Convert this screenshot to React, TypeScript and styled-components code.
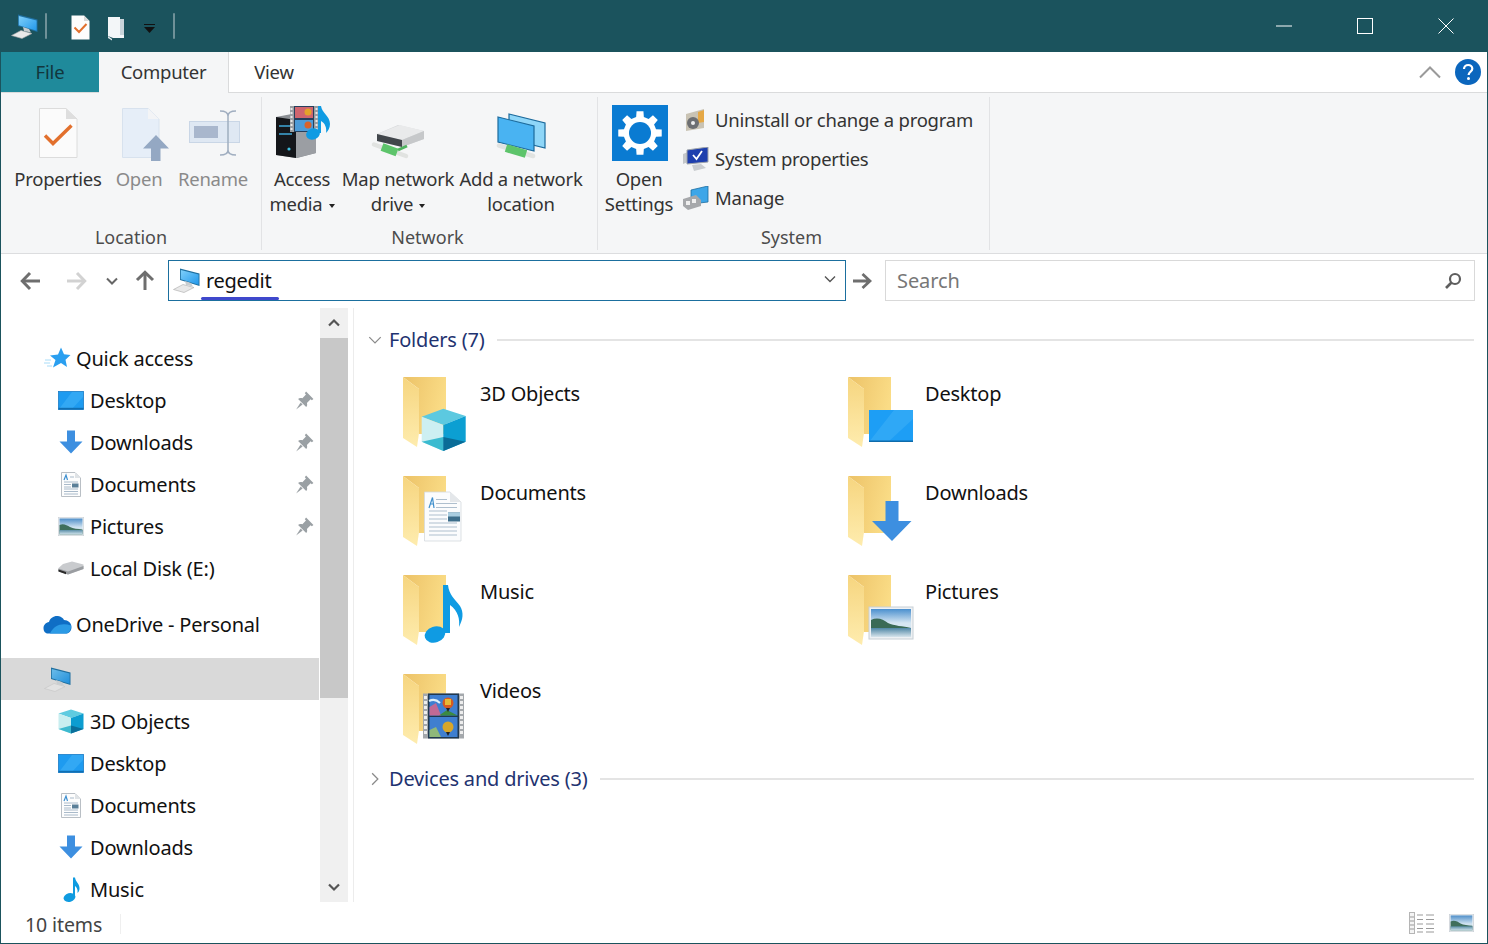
import React from "react";
import styled, { createGlobalStyle } from "styled-components";

const FONT = `"Noto Sans", "Open Sans", "Liberation Sans", sans-serif`;

const Global = createGlobalStyle`
  html, body { margin: 0; padding: 0; background: #fff; }
  body { font-family: ${FONT}; }
  * { box-sizing: border-box; }
  svg { display: block; flex: none; }
`;

const Win = styled.div`
  width: 1488px; height: 944px; display: flex; flex-direction: column; overflow: hidden;
  border: 1px solid #1b535d; border-top: 0; background: #fff;
`;
const TitleBar = styled.div`
  height: 52px; margin: 0 -1px; background: #1b535d; display: flex; align-items: center; flex: none;
`;
const Qat = styled.div`display: flex; align-items: center; padding-left: 11px; flex: 1;`;
const QatSep = styled.div<{ $l: number; $r: number }>`
  height: 26px; width: 0; background: #1b535d; border: 1px solid #6f9198; border-width: 0 1px; border-radius: 1px;
  box-sizing: content-box; margin: 0 ${(p) => p.$r}px 0 ${(p) => p.$l}px;
`;
const QatIcon = styled.div<{ $l: number; $t: number }>`margin-left: ${(p) => p.$l}px; margin-top: ${(p) => p.$t}px;`;
const WinBtn = styled.div`width: 81px; height: 52px; display: flex; align-items: center; justify-content: center;`;
const WinControls = styled.div`display: flex; padding-right: 2px;`;

const TabBar = styled.div`
  height: 41px; flex: none; display: flex; border-bottom: 1px solid #dadbdc; background: #fff; align-items: stretch;
`;
const FileTab = styled.div`
  width: 98px; background: #1f8a9b; color: #12363d; font-size: 18.5px; letter-spacing: -0.2px; padding-bottom: 2px;
  display: flex; align-items: center; justify-content: center;
`;
const Tab = styled.div<{ $active?: boolean }>`
  width: ${(p) => (p.$active ? 130 : 90)}px; background: ${(p) => (p.$active ? "#f5f6f7" : "#fff")};
  margin-bottom: ${(p) => (p.$active ? -1 : 0)}px;
  ${(p) => (p.$active ? "border-right: 1px solid #dadbdc;" : "")}
  color: #333; font-size: 18.5px; letter-spacing: -0.25px; padding-bottom: 2px; display: flex; align-items: center; justify-content: center;
`;
const TabRight = styled.div`margin-left: auto; display: flex; align-items: center; gap: 14px; padding-right: 6px;`;

const Ribbon = styled.div`
  height: 161px; flex: none; background: #f5f6f7; border-bottom: 1px solid #dcdddf; display: flex; padding: 4px 0 3px;
  letter-spacing: -0.25px;
`;
const Group = styled.div<{ $w: number; $pad: number }>`
  width: ${(p) => p.$w}px; padding-left: ${(p) => p.$pad}px; border-right: 1px solid #e2e3e5; display: flex; flex-direction: column;
`;
const Commands = styled.div`flex: 1; display: flex; min-height: 0;`;
const GroupLabel = styled.div<{ $shift: number }>`
  height: 26px; line-height: 26px; text-align: center; color: #4c4c4c; font-size: 18px; letter-spacing: 0; margin-left: ${(p) => -p.$shift}px;
`;
const Command = styled.div<{ $w: number; $dim?: boolean }>`
  width: ${(p) => p.$w}px; padding-top: 6px; display: flex; flex-direction: column; align-items: center;
  color: ${(p) => (p.$dim ? "#8a8a8a" : "#333")}; font-size: 18.5px; line-height: 25px; text-align: center; white-space: nowrap;
`;
const CommandIcon = styled.div`height: 63px; width: 64px; flex: none;`;
const Caret = styled.span`
  display: inline-block; width: 0; height: 0; margin-left: 6px; vertical-align: 3px;
  border-left: 3.5px solid transparent; border-right: 3.5px solid transparent; border-top: 4px solid #222;
`;
const SmallList = styled.div`display: flex; flex-direction: column; padding: 3px 0 0 7px;`;
const SmallCmd = styled.div`
  height: 39px; display: flex; align-items: center; gap: 6px; color: #333; font-size: 18.5px; white-space: nowrap;
`;

const Nav = styled.div`height: 54px; flex: none; display: flex; align-items: center; padding: 0 0 2px 18px; background: #fff;`;
const NavSlot = styled.div<{ $gap: number }>`margin-left: ${(p) => p.$gap}px; margin-top: 2px; flex: none;`;
const Address = styled.div`
  position: relative; margin-left: 11px; width: 678px; height: 41px; border: 1px solid #1b6f9e; display: flex; align-items: center; padding-left: 4px;
`;
const AddressText = styled.div`margin-left: 6px; font-size: 20px; letter-spacing: -0.3px; color: #111; line-height: 24px; margin-top: 1px;`;
const Squiggle = styled.div`
  position: absolute; left: 32px; bottom: 0; width: 78px; height: 3px; background: #3f48cc; border-radius: 2px;
`;
const AddressChevron = styled.div`margin-left: auto; padding-right: 8px; margin-top: -3px;`;
const Search = styled.div`
  margin-left: 11px; width: 590px; height: 41px; border: 1px solid #d9d9d9; display: flex; align-items: center; justify-content: space-between;
  padding: 1px 12px 0 11px; color: #777; font-size: 20px; letter-spacing: -0.1px;
`;

const Body = styled.div`flex: 1; min-height: 0; display: flex; letter-spacing: -0.2px;`;
const Side = styled.div`width: 318px; margin-right: 1px; flex: none; padding-top: 29px; overflow: hidden;`;
const Row = styled.div<{ $child?: boolean; $sel?: boolean; $gapTop?: number }>`
  height: 42px; display: flex; align-items: center; gap: 6px; flex: none;
  padding-left: ${(p) => (p.$child ? 57 : 43)}px; padding-right: 4px;
  margin-top: ${(p) => p.$gapTop ?? 0}px;
  background: ${(p) => (p.$sel ? "#d9d9d9" : "transparent")};
  color: #111; font-size: 20px; white-space: nowrap;
`;
const RowIcon = styled.div`width: 26px; height: 26px; display: flex; align-items: center; justify-content: center; flex: none;`;
const PinSlot = styled.div`margin-left: auto;`;

const Scroll = styled.div`width: 28px; flex: none; display: flex; flex-direction: column; background: #f0f0f0;`;
const ScrollBtn = styled.div`height: 30px; flex: none; display: flex; align-items: center; justify-content: center;`;
const Thumb = styled.div`height: 360px; flex: none; background: #c8c8c8;`;
const ScrollTrack = styled.div`flex: 1;`;

const Content = styled.div`
  flex: 1; margin-left: 5px; border-left: 1px solid #ececec; padding: 20px 13px 0 15px; min-width: 0;
`;
const Header = styled.div<{ $top?: number }>`
  height: 24px; display: flex; align-items: center; margin-top: ${(p) => p.$top ?? 0}px;
  color: #1f3370; font-size: 20px; white-space: nowrap;
`;
const HeaderChevron = styled.div`margin-left: -2px;`;
const HeaderTitle = styled.span`margin-left: 6px; line-height: 24px;`;
const HeaderLine = styled.div`flex: 1; height: 2px; background: #e4e4e4; margin-left: 12px;`;
const Grid = styled.div`
  display: grid; grid-template-columns: 445px 445px; grid-auto-rows: 74px; row-gap: 25px; margin: 25px 0 0 34px;
`;
const Item = styled.div`display: flex; gap: 11px;`;
const ItemName = styled.div`font-size: 20px; color: #111; line-height: 24px; padding-top: 5px;`;

const Status = styled.div`height: 41px; flex: none; display: flex; align-items: center; padding: 3px 13px 0 24px; color: #444; font-size: 19.5px; letter-spacing: -0.1px;`;
const StatusSep = styled.div`width: 1px; height: 20px; background: #efefef; margin-left: 18px;`;
const StatusViews = styled.div`margin-left: auto; display: flex; gap: 14px; align-items: center; margin-top: -3px;`;

/* ---------- drawings ---------- */
const gearPath = (cx: number, cy: number, R: number, r: number, teeth: number) => {
  const pts: string[] = [];
  const step = (Math.PI * 2) / teeth;
  for (let i = 0; i < teeth; i++) {
    const a = i * step - Math.PI / 2;
    const w = step * 0.2;
    const w2 = step * 0.3;
    [[a - w2, r], [a - w, R], [a + w, R], [a + w2, r]].forEach(([t, d]) =>
      pts.push(`${(cx + Math.cos(t) * d).toFixed(2)} ${(cy + Math.sin(t) * d).toFixed(2)}`)
    );
  }
  return "M" + pts.join("L") + "Z";
};

const ComputerIcon = ({ dim = false }: { dim?: boolean }) => (
  <svg width="27" height="25" viewBox="0 0 27 25">
    <defs>
      <linearGradient id="cscr" x1="0" y1="0" x2="1" y2="1">
        <stop offset="0" stopColor="#7fd0fb" /><stop offset="1" stopColor="#2197ea" />
      </linearGradient>
    </defs>
    <path d="M7 0.5L26.5 5.5V18L7 12Z" fill="#1f6f9f" />
    <path d="M7.8 2L25.6 6.5V16.8L7.8 11.2Z" fill="url(#cscr)" opacity={dim ? 0.8 : 1} />
    <path d="M0.5 21.5L10 16.5L21 19.5L11 24.5Z" fill={dim ? "#e2e2e2" : "#e9e9e9"} stroke={dim ? "#c4c4c4" : "#aaa"} strokeWidth="0.6" />
    <path d="M12 13L18 15L20 18.5L13 17Z" fill="#c8cdd0" />
  </svg>
);

const Arrow = ({ color, dir }: { color: string; dir: "l" | "r" | "u" }) => {
  const rot = dir === "l" ? 0 : dir === "r" ? 180 : 90;
  return (
    <svg width="24" height="24" viewBox="0 0 24 24">
      <g transform={`rotate(${rot} 12 12)`} fill="none" stroke={color} strokeWidth="3">
        <path d="M3 12H21" /><path d="M11 4L3.3 12L11 20" />
      </g>
    </svg>
  );
};

const Chevron = ({ size = 14, color = "#555", dir = "d", sw = 2 }: { size?: number; color?: string; dir?: "d" | "u" | "r"; sw?: number }) => {
  const d = dir === "d" ? "M2 4.5L7 9.5L12 4.5" : dir === "u" ? "M2 9.5L7 4.5L12 9.5" : "M4.5 2L9.5 7L4.5 12";
  return (
    <svg width={size} height={size} viewBox="0 0 14 14"><path d={d} fill="none" stroke={color} strokeWidth={sw} /></svg>
  );
};

const Pin = () => (
  <svg width="21" height="21" viewBox="0 0 20 20">
    <g fill="#9aa0a4">
      <path d="M11.5 1.5L18.5 8.5L17 9.8L15.8 8.8L12.3 12.3C12.8 14 12.5 15.3 11.6 16.3L3.9 8.6C4.9 7.6 6.2 7.3 8 7.9L11.4 4.4L10.3 3Z" />
      <path d="M6.3 12L8.2 13.9L2 18.5Z" />
    </g>
  </svg>
);

const StarIcon = () => (
  <svg width="27" height="22" viewBox="0 0 27 22">
    <path d="M1 13H7M0 16H6M3 19H8" stroke="#a8dcf8" strokeWidth="1" />
    <path d="M17 0.5L20 7.3L26.5 8L21.5 12.7L23 20L17 16L9 20.5L11.5 13L6 8.5L14 7.5Z" fill="#2a9ff0" />
  </svg>
);
const DesktopIcon = () => (
  <svg width="26" height="19" viewBox="0 0 26 19">
    <rect x="0.5" y="0.5" width="25" height="18" fill="#1e9bf0" stroke="#1a7cc5" strokeWidth="0.8" />
    <path d="M1 18L14 1H25V6L14 18Z" fill="#3fb0f7" opacity="0.6" />
    <rect x="0.5" y="16.8" width="25" height="1.7" fill="#0f6fb3" />
  </svg>
);
const DownIcon = () => (
  <svg width="24" height="24" viewBox="0 0 24 24">
    <path d="M8 0.5H16V11.5H23.5L12 23.5L0.5 11.5H8Z" fill="#3d8fe0" />
  </svg>
);
const DocIcon = () => (
  <svg width="20" height="25" viewBox="0 0 20 25">
    <path d="M0.5 0.5H14L19.5 6V24.5H0.5Z" fill="#fdfdfd" stroke="#b9bfc5" />
    <path d="M14 0.5V6H19.5Z" fill="#dfe3e6" />
    <path d="M3 8L5 3L6.5 8" stroke="#3d8fd0" strokeWidth="1.2" fill="none" />
    <path d="M9 5H13M3 10H17M3 17H17M3 19.5H17M3 22H17M3 12.5H10M3 15H10" stroke="#9fb2c4" strokeWidth="0.9" />
    <rect x="11" y="11.5" width="6.5" height="4" fill="#5a7f98" />
  </svg>
);
const PicIcon = ({ w = 26, h = 19 }: { w?: number; h?: number }) => (
  <svg width={w} height={h} viewBox="0 0 26 19">
    <defs>
      <linearGradient id="psky" x1="0" y1="0" x2="0" y2="1"><stop offset="0" stopColor="#4f8fc9" /><stop offset="0.55" stopColor="#cfe2f0" /></linearGradient>
      <linearGradient id="psea" x1="0" y1="0" x2="0" y2="1"><stop offset="0" stopColor="#5c8fa8" /><stop offset="1" stopColor="#d2e4ec" /></linearGradient>
    </defs>
    <rect x="0" y="0" width="26" height="19" fill="#f0f2f4" stroke="#c5ccd2" strokeWidth="1" />
    <rect x="1.5" y="1.5" width="23" height="16" fill="url(#psky)" />
    <path d="M1.5 8C5 6 9 8 12 10C15 11.5 20 12 24.5 12.5V17.5H1.5Z" fill="#3f6f5c" />
    <rect x="1.5" y="13" width="23" height="4.5" fill="url(#psea)" />
  </svg>
);
const DiskIcon = () => (
  <svg width="26" height="14" viewBox="0 0 26 14">
    <path d="M5 3L14 0.5L25.5 3.5V8L10 13.5L0.5 10V7Z" fill="#c9cbce" />
    <path d="M0.5 7.5L10 10.5L25.5 5V8L10 13.5L0.5 10.5Z" fill="#9a9da1" />
    <path d="M0.5 8.5L8 11V13.2L0.5 10.5Z" fill="#2b2b2b" />
  </svg>
);
const CloudIcon = () => (
  <svg width="29" height="19" viewBox="0 0 29 19">
    <path d="M6 7C7 3 11 0.5 15 1C18 1.4 20 3 21 5C25 5 28.5 8 28.5 12C28.5 16 26 18.5 23 18.5H5C2 18.5 0.5 16 0.5 13C0.5 10 3 7.5 6 7Z" fill="#0f6ec5" />
    <path d="M7 18.5C11 10 19 7.5 28 10.5C28.5 14 26 18.5 23 18.5Z" fill="#2b9ae5" />
  </svg>
);
const CubeSmall = () => (
  <svg width="26" height="25" viewBox="0 0 26 25">
    <path d="M13 0.5L25.5 4.5L13 9L0.5 4.5Z" fill="#5fcbe0" />
    <path d="M0.5 4.5L13 9V24.5L0.5 20Z" fill="#c8eef0" />
    <path d="M25.5 4.5L13 9V24.5L25.5 20Z" fill="#0d9dd0" />
    <path d="M0.5 20L13 16.5V24.5Z" fill="#3db9cf" />
    <path d="M25.5 20L13 16.5V24.5Z" fill="#0b6f9a" />
  </svg>
);
const NoteSmall = () => (
  <svg width="17" height="25" viewBox="0 0 17 25">
    <ellipse cx="6.5" cy="20.5" rx="6" ry="4.3" fill="#0f9be0" transform="rotate(-15 6.5 20.5)" />
    <path d="M10 20V0.5H12C12.5 5 17 7 16.5 12C16.3 14 15.5 15 14.5 16C15 12 13.5 10 12 9V20Z" fill="#0f9be0" />
  </svg>
);

const Folder = ({ children }: { children?: React.ReactNode }) => (
  <svg width="66" height="74" viewBox="0 0 66 74" style={{ overflow: "visible" }}>
    <defs>
      <linearGradient id="fback" x1="0" y1="0" x2="1" y2="0.3"><stop offset="0" stopColor="#ecc267" /><stop offset="1" stopColor="#fadc86" /></linearGradient>
      <linearGradient id="fflap" x1="0" y1="0" x2="0" y2="1"><stop offset="0" stopColor="#f6d57f" /><stop offset="1" stopColor="#feecae" /></linearGradient>
    </defs>
    <path d="M0 0H43V57H16V12Z" fill="url(#fback)" />
    <path d="M14 57H40L34 66H14Z" fill="#fff" />
    <path d="M0 0L16 12V56L14 70L0 61Z" fill="url(#fflap)" />
    {children}
  </svg>
);
const FDesktop = () => (
  <g>
    <rect x="21" y="33" width="44" height="32" fill="#1d9ef5" />
    <path d="M21 65L46 33H65V42L40 65Z" fill="#48b4f8" opacity="0.45" />
    <rect x="21" y="63.5" width="44" height="1.5" fill="#0e6bab" />
  </g>
);
const FCube = () => (
  <g>
    <path d="M40.3 31.7L62.7 39L40.3 48L18.7 39.7Z" fill="#5cc9e0" />
    <path d="M18.7 39.7L40.3 48V74L18.7 64.7Z" fill="#cdeff2" />
    <path d="M62.7 39L40.3 48V74L62.7 64.7Z" fill="#0c9fd2" />
    <path d="M18.7 64.7L40.3 60V74Z" fill="#3bbbd0" />
    <path d="M62.7 64.7L40.3 60V74Z" fill="#0a6c97" />
  </g>
);
const FDoc = () => (
  <g>
    <path d="M21.5 16H47L58 26V65H21.5Z" fill="#fbfcfd" stroke="#d4d9dd" strokeWidth="0.8" />
    <path d="M47 16V26H58Z" fill="#e4e7ea" />
    <path d="M26 32L29.5 21.5L31 32M27 28H31" stroke="#3f8fcc" strokeWidth="1.2" fill="none" />
    <path d="M33 23.5H44M33 27.5H54M33 31.5H54M26 35H44M26 39H44M26 43H44M26 47H54M26 51H54M26 55H54M26 59H54" stroke="#aebfce" strokeWidth="1" />
    <rect x="45" y="36.5" width="12" height="9" fill="#3d6e8b" />
    <rect x="45" y="36.5" width="12" height="4" fill="#a9cde0" />
  </g>
);
const FDown = () => <path d="M37.5 25H50.5V45H63.5L44 65L24 45H37.5Z" fill="#3d8fe0" />;
const FMusic = () => (
  <g fill="#0f9be3">
    <ellipse cx="32" cy="59.5" rx="10.5" ry="8" transform="rotate(-18 32 59.5)" />
    <path d="M40 58V10H45C46 20 52 24 57 31C61 38 60 44 56 52C57 44 55 36 47 30V58Z" />
  </g>
);
const FPic = () => (
  <g>
    <defs>
      <linearGradient id="psky2" x1="0" y1="0" x2="0" y2="1"><stop offset="0" stopColor="#4b90cf" /><stop offset="0.5" stopColor="#d6e6f2" /><stop offset="1" stopColor="#d6e6f2" /></linearGradient>
      <linearGradient id="psea2" x1="0" y1="0" x2="0" y2="1"><stop offset="0" stopColor="#4f86a5" /><stop offset="1" stopColor="#d7e5ec" /></linearGradient>
    </defs>
    <rect x="21" y="32" width="44" height="32" fill="#eef1f4" stroke="#c8d0d6" />
    <rect x="23" y="34" width="40" height="28" fill="url(#psky2)" />
    <path d="M23 45C29 42 35 44 40 48C46 51 55 51 63 53V62H23Z" fill="#3a6a55" />
    <rect x="23" y="53" width="40" height="9" fill="url(#psea2)" />
  </g>
);
const FilmFrames = () => (
  <g>
    <rect x="20" y="19.5" width="41" height="45" fill="#a4a8ac" />
    <rect x="25" y="19.5" width="31" height="45" fill="#20384f" />
    <rect x="26.5" y="21" width="28" height="20.5" fill="#3f7fd0" />
    <rect x="26.5" y="43" width="28" height="20" fill="#3f7fd0" />
    <path d="M26.5 41.5V33L33 29L38 41.5Z" fill="#c06a95" />
    <path d="M26.5 63V56L33 53L38 63Z" fill="#8fb87a" />
    <path d="M36 41.5L44 36L54.5 41.5Z" fill="#3b8a42" />
    <path d="M26 27C30 25 34 26 37 29" stroke="#dff0f8" strokeWidth="2" fill="none" />
    <circle cx="45" cy="29" r="5.5" fill="#d65a22" />
    <path d="M42 25H48V31H42Z" fill="#e7b934" />
    <circle cx="45" cy="53" r="5.5" fill="#d8a62a" />
    <path d="M43 34L45 38L47 34ZM43 58L45 62L47 58Z" fill="#222" />
    {[22, 27, 32, 37, 42, 47, 52, 57].map((y) => (
      <g key={y} fill="#eee">
        <rect x="21" y={y} width="3" height="3" />
        <rect x="57" y={y} width="3" height="3" />
      </g>
    ))}
  </g>
);

const FOLDERS: [string, React.ReactNode][] = [
  ["3D Objects", <FCube />],
  ["Desktop", <FDesktop />],
  ["Documents", <FDoc />],
  ["Downloads", <FDown />],
  ["Music", <FMusic />],
  ["Pictures", <FPic />],
  ["Videos", <FilmFrames />],
];

const L = ({ x, y, children }: { x: number; y: number; children: React.ReactNode }) => (
  <svg width="64" height="64" viewBox={`${x} ${y} 64 64`} style={{ overflow: "visible" }}>{children}</svg>
);

export default function App() {
  return (
    <>
      <Global />
      <Win>
        <TitleBar>
          <Qat>
            <ComputerIcon />
            <QatSep $l={7} $r={0} />
            <QatIcon $l={24} $t={3}>
              <svg width="19" height="25" viewBox="0 0 19 25">
                <path d="M0.5 0.5H13L18.5 6V24.5H0.5Z" fill="#fdfdfd" />
                <path d="M13 0.5V6H18.5Z" fill="#d8d8d8" />
                <path d="M3.5 12.5L8 17L15.5 9" fill="none" stroke="#e2702d" strokeWidth="2" />
              </svg>
            </QatIcon>
            <QatIcon $l={18} $t={5}>
              <svg width="17" height="24" viewBox="0 0 17 24">
                <path d="M0 0H12V18H16V21H5L0 19Z" fill="#f3f6f8" />
                <path d="M4 22V23.5L0 21V19Z" fill="#dfe6ea" />
                <path d="M12 2H16V18H12Z" fill="#c9d4da" />
              </svg>
            </QatIcon>
            <QatIcon $l={18} $t={6}>
              <svg width="14" height="10" viewBox="0 0 14 10">
                <path d="M1 0.5H12" stroke="#111" strokeWidth="1" />
                <path d="M1 3H12L6.5 9Z" fill="#111" />
              </svg>
            </QatIcon>
            <QatSep $l={16} $r={0} />
          </Qat>
          <WinControls>
            <WinBtn>
              <svg width="16" height="2" viewBox="0 0 16 2"><path d="M0 1H16" stroke="#fff" strokeWidth="1" /></svg>
            </WinBtn>
            <WinBtn>
              <svg width="16" height="16" viewBox="0 0 16 16"><rect x="0.5" y="0.5" width="15" height="15" fill="none" stroke="#fff" /></svg>
            </WinBtn>
            <WinBtn>
              <svg width="16" height="16" viewBox="0 0 16 16"><path d="M0.5 0.5L15.5 15.5M15.5 0.5L0.5 15.5" stroke="#fff" /></svg>
            </WinBtn>
          </WinControls>
        </TitleBar>

        <TabBar>
          <FileTab>File</FileTab>
          <Tab $active>Computer</Tab>
          <Tab>View</Tab>
          <TabRight>
            <svg width="22" height="14" viewBox="0 0 22 14"><path d="M1 12.5L11 2.5L21 12.5" fill="none" stroke="#9a9a9a" strokeWidth="2" /></svg>
            <svg width="26" height="26" viewBox="0 0 26 26">
              <circle cx="13" cy="13" r="13" fill="#0b66bd" />
              <path d="M9 10C9 7.5 11 6 13.2 6C15.5 6 17.3 7.5 17.3 9.7C17.3 12.5 13.6 13 13.6 16" fill="none" stroke="#fff" strokeWidth="2.2" />
              <circle cx="13.5" cy="19.5" r="1.5" fill="#fff" />
            </svg>
          </TabRight>
        </TabBar>

        <Ribbon>
          <Group $w={261} $pad={8}>
            <Commands>
              <Command $w={98}>
                <CommandIcon>
                  <L x={25} y={103}>
                    <path d="M38.5 108.5H65L76 119V157.5H38.5Z" fill="#fbfbfb" stroke="#dcdcdc" />
                    <path d="M65 108.5V119H76Z" fill="#dedede" />
                    <path d="M44 135.5L52 143.5L70.5 125.5" fill="none" stroke="#e2702d" strokeWidth="3.4" />
                  </L>
                </CommandIcon>
                <div>Properties</div>
              </Command>
              <Command $w={64} $dim>
                <CommandIcon>
                  <L x={106} y={103}>
                    <path d="M121.5 108.5H147L158 119V157.5H121.5Z" fill="#e6eef8" stroke="#d8e2ee" />
                    <path d="M147 108.5V119H158Z" fill="#f3f4f6" />
                    <path d="M155 135L168 148.5H159.5V161H150V148.5H142Z" fill="#94a8c3" />
                  </L>
                </CommandIcon>
                <div>Open</div>
              </Command>
              <Command $w={84} $dim>
                <CommandIcon>
                  <L x={180} y={103}>
                    <rect x="188.5" y="121.5" width="50" height="21" fill="#dfe8f3" stroke="#c9d6e6" />
                    <rect x="193" y="126" width="24" height="12" fill="#a9b7cd" />
                    <path d="M219 111C224 111 227 112 227 116V150C227 154 224 155 219 155M235 111C230 111 227 112 227 116M227 150C227 154 230 155 235 155" fill="none" stroke="#a0aec0" strokeWidth="1.5" />
                  </L>
                </CommandIcon>
                <div>Rename</div>
              </Command>
            </Commands>
            <GroupLabel $shift={8}>Location</GroupLabel>
          </Group>

          <Group $w={336} $pad={6}>
            <Commands>
              <Command $w={68}>
                <CommandIcon>
                  <L x={270} y={103}>
                    <path d="M276 117L297 113L316 117V153L297 158L276 155Z" fill="#8b8f94" />
                    <path d="M276 117L296 120V158L276 155Z" fill="#14161a" />
                    <path d="M296 120L316 117V153L296 158Z" fill="#9b9ea3" />
                    <path d="M279 126H292M279 134H292" stroke="#3fa8d8" strokeWidth="1.4" />
                    <circle cx="289" cy="149" r="1.6" fill="#3fc0e0" />
                    <rect x="290" y="106" width="28" height="26" fill="#9a9ea2" />
                    <rect x="294" y="106" width="20" height="26" fill="#26405c" />
                    <rect x="295" y="107" width="18" height="11" fill="#d0656e" />
                    <rect x="295" y="120" width="18" height="11" fill="#4c9bd8" />
                    <circle cx="308" cy="112" r="3.5" fill="#e3a32a" />
                    <circle cx="308" cy="125" r="3.5" fill="#d9622b" />
                    <path d="M291.5 108V130M316.5 108V130" stroke="#e8e8e8" strokeWidth="2" strokeDasharray="2 2" />
                    <ellipse cx="313" cy="134" rx="7" ry="5.5" fill="#0f9be3" transform="rotate(-18 313 134)" />
                    <path d="M318 133V106H321C322 113 330 116 330 124C330 128 328 131 326 133C327 128 325 123 321 121V133Z" fill="#0f9be3" />
                  </L>
                </CommandIcon>
                <div>Access</div>
                <div>media<Caret /></div>
              </Command>
              <Command $w={124}>
                <CommandIcon>
                  <L x={366} y={103}>
                    <path d="M377 134L398 125L424 131V139L402 147L377 141Z" fill="#d8dadc" />
                    <path d="M377 134L402 140L424 131L400 125Z" fill="#e9eaeb" />
                    <path d="M377 134L402 140V147L377 141Z" fill="#41464b" />
                    <path d="M402 140L424 131V139L402 147Z" fill="#c6c8ca" />
                    <path d="M374 144.5L406 156" stroke="#e1e3e1" strokeWidth="4.5" strokeLinecap="round" />
                    <path d="M382 147L397 152.5" stroke="#5dc46b" strokeWidth="8" />
                    <path d="M398 150L407 146" stroke="#4fb35f" strokeWidth="3" />
                  </L>
                </CommandIcon>
                <div>Map network</div>
                <div>drive<Caret /></div>
              </Command>
              <Command $w={122}>
                <CommandIcon>
                  <L x={489} y={103}>
                    <path d="M509 114L545 123V148L509 139Z" fill="#8ed6f8" stroke="#1c6a9c" strokeWidth="1.2" />
                    <path d="M498 117L534 126V151L498 142Z" fill="#49b3f2" stroke="#1c6a9c" strokeWidth="1.2" />
                    <path d="M499 145.5L533 156" stroke="#e1e3e1" strokeWidth="4.5" strokeLinecap="round" />
                    <path d="M506 148L526 154" stroke="#5dc46b" strokeWidth="8" />
                  </L>
                </CommandIcon>
                <div>Add a network</div>
                <div>location</div>
              </Command>
            </Commands>
            <GroupLabel $shift={10}>Network</GroupLabel>
          </Group>

          <Group $w={392} $pad={4}>
            <Commands>
              <Command $w={74}>
                <CommandIcon>
                  <L x={607} y={103}>
                    <rect x="612" y="105" width="56" height="56" fill="#0a7bd2" />
                    <path d={gearPath(640, 133, 22, 16.5, 8)} fill="#fff" />
                    <circle cx="640" cy="133" r="11" fill="#0a7bd2" />
                  </L>
                </CommandIcon>
                <div>Open</div>
                <div>Settings</div>
              </Command>
              <SmallList>
                <SmallCmd>
                  <svg width="26" height="24" viewBox="0 0 26 24">
                    <path d="M3 6L21 1V20L3 23Z" fill="#c9c3b4" />
                    <path d="M15 4L21 2V14L15 15Z" fill="#e5a846" />
                    <circle cx="10" cy="15" r="6" fill="#6d6f72" />
                    <circle cx="10" cy="15" r="2" fill="#eee" />
                  </svg>
                  Uninstall or change a program
                </SmallCmd>
                <SmallCmd>
                  <svg width="26" height="24" viewBox="0 0 26 24">
                    <path d="M0 7L5 5V15L0 17Z" fill="#c4c7ca" />
                    <path d="M4 3L25 0V15L4 17Z" fill="#1e3fae" stroke="#9fa4aa" />
                    <path d="M10 8L13.5 12L19 4" fill="none" stroke="#fff" strokeWidth="1.8" />
                    <path d="M9 18L18 17L23 21L11 24Z" fill="#c9ccd0" />
                  </svg>
                  System properties
                </SmallCmd>
                <SmallCmd>
                  <svg width="26" height="24" viewBox="0 0 26 24">
                    <path d="M8 4L25 0V16L8 18Z" fill="#3da6e8" stroke="#1d6d9f" strokeWidth="0.8" />
                    <path d="M0 13L13 9L18 14V20L5 24L0 20Z" fill="#a6a8ab" />
                    <path d="M3 15H7V19H3ZM9 13H13V17H9Z" fill="#efefef" />
                  </svg>
                  Manage
                </SmallCmd>
              </SmallList>
            </Commands>
            <GroupLabel $shift={8}>System</GroupLabel>
          </Group>
        </Ribbon>

        <Nav>
          <NavSlot $gap={0}><Arrow color="#6e6e6e" dir="l" /></NavSlot>
          <NavSlot $gap={21}><Arrow color="#d2d2d2" dir="r" /></NavSlot>
          <NavSlot $gap={17}><Chevron color="#666" /></NavSlot>
          <NavSlot $gap={14}><Arrow color="#6e6e6e" dir="u" /></NavSlot>
          <Address>
            <ComputerIcon />
            <AddressText>regedit</AddressText>
            <Squiggle />
            <AddressChevron><Chevron size={14} color="#555" sw={1.4} /></AddressChevron>
          </Address>
          <NavSlot $gap={6}>
            <svg width="20" height="20" viewBox="0 0 20 20" style={{ marginRight: 2 }}>
              <path d="M1 10H18M10.5 3L18 10L10.5 17" fill="none" stroke="#6e6e6e" strokeWidth="2.8" />
            </svg>
          </NavSlot>
          <Search>
            Search
            <svg width="18" height="18" viewBox="0 0 18 18">
              <circle cx="11" cy="7" r="5" fill="none" stroke="#5e5e5e" strokeWidth="2.2" />
              <path d="M7.5 10.5L2 16" stroke="#5e5e5e" strokeWidth="2.6" />
            </svg>
          </Search>
        </Nav>

        <Body>
          <Side>
            <Row><RowIcon><StarIcon /></RowIcon>Quick access</Row>
            <Row $child><RowIcon><DesktopIcon /></RowIcon>Desktop<PinSlot><Pin /></PinSlot></Row>
            <Row $child><RowIcon><DownIcon /></RowIcon>Downloads<PinSlot><Pin /></PinSlot></Row>
            <Row $child><RowIcon><DocIcon /></RowIcon>Documents<PinSlot><Pin /></PinSlot></Row>
            <Row $child><RowIcon><PicIcon /></RowIcon>Pictures<PinSlot><Pin /></PinSlot></Row>
            <Row $child><RowIcon><DiskIcon /></RowIcon>Local Disk (E:)</Row>
            <Row $gapTop={14}><RowIcon><CloudIcon /></RowIcon>OneDrive - Personal</Row>
            <Row $sel $gapTop={13}><RowIcon><ComputerIcon dim /></RowIcon></Row>
            <Row $child><RowIcon><CubeSmall /></RowIcon>3D Objects</Row>
            <Row $child><RowIcon><DesktopIcon /></RowIcon>Desktop</Row>
            <Row $child><RowIcon><DocIcon /></RowIcon>Documents</Row>
            <Row $child><RowIcon><DownIcon /></RowIcon>Downloads</Row>
            <Row $child><RowIcon><NoteSmall /></RowIcon>Music</Row>
          </Side>
          <Scroll>
            <ScrollBtn><Chevron size={14} color="#555" dir="u" sw={2.2} /></ScrollBtn>
            <Thumb />
            <ScrollTrack />
            <ScrollBtn><Chevron size={14} color="#555" sw={2.2} /></ScrollBtn>
          </Scroll>
          <Content>
            <Header>
              <HeaderChevron><Chevron size={16} color="#8a8a8a" sw={1.1} /></HeaderChevron>
              <HeaderTitle>Folders (7)</HeaderTitle>
              <HeaderLine />
            </Header>
            <Grid>
              {FOLDERS.map(([name, art]) => (
                <Item key={name}>
                  <Folder>{art}</Folder>
                  <ItemName>{name}</ItemName>
                </Item>
              ))}
            </Grid>
            <Header $top={19}>
              <HeaderChevron><Chevron size={16} color="#8a8a8a" dir="r" sw={1.1} /></HeaderChevron>
              <HeaderTitle>Devices and drives (3)</HeaderTitle>
              <HeaderLine />
            </Header>
          </Content>
        </Body>

        <Status>
          10 items
          <StatusSep />
          <StatusViews>
            <svg width="26" height="22" viewBox="0 0 26 22">
              <rect x="0.5" y="0.5" width="5" height="21" fill="#f4f4f4" stroke="#b5b5b5" />
              <path d="M1 5H5M1 9H5M1 13H5M1 17H5" stroke="#999" />
              <path d="M8 3H14M17 3H25M8 7.5H14M17 7.5H25M8 12H14M17 12H25M8 16.5H14M17 16.5H25M8 20H14M17 20H25" stroke="#9a9a9a" strokeWidth="1.2" />
            </svg>
            <PicIcon w={25} h={18} />
          </StatusViews>
        </Status>
      </Win>
    </>
  );
}
